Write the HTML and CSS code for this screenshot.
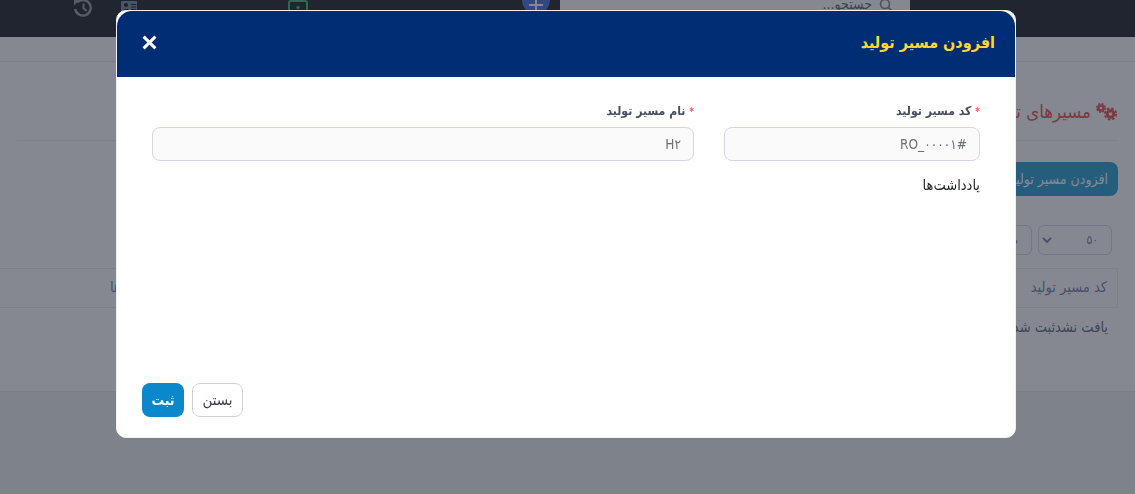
FILE: index.html
```html
<!DOCTYPE html>
<html lang="fa">
<head>
<meta charset="utf-8">
<title>افزودن مسیر تولید</title>
<link rel="stylesheet" href="styles.css">
</head>
<body>
<div class="page">
  <header class="topbar">
    <svg class="ico-history" viewBox="0 0 18 17"><path d="M3.200 2.500A7.800 7.800 0 1 1 1.200 9" fill="none" stroke="#a3a6ab" stroke-width="2.400"/><path d="M9.500 3.500v4.800l3.300 2.700" fill="none" stroke="#a3a6ab" stroke-width="2"/><path d="M0 0h5.500L0 5.500z" fill="#a3a6ab"/></svg>
    <svg class="ico-card" viewBox="0 0 16 11"><rect width="16" height="11" rx="1" fill="#8a96a8"/><circle cx="5" cy="4" r="2" fill="#2c3038"/><path d="M2 10c0-3 6-3 6 0zM10 3h5v1h-5zM10 5.500h5v1h-5zM10 8h5v1h-5z" fill="#2c3038"/></svg>
    <svg class="ico-screen" viewBox="0 0 20 11"><path d="M1 11V2.500Q1 1 2.500 1h15Q19 1 19 2.500V11" fill="none" stroke="#4fc088" stroke-width="2"/><circle cx="10" cy="7.500" r="1.700" fill="#4fc088"/></svg>
    <div class="plus"><span class="plus-mark"></span></div>
    <div class="search">
      <span class="search-text">جستجو...</span>
      <svg class="ico-search" viewBox="0 0 14 14"><circle cx="6" cy="4" r="4.500" fill="none" stroke="#8a9099" stroke-width="1.600"/><path d="M9.500 7.500l4 4" stroke="#8a9099" stroke-width="1.800"/></svg>
    </div>
  </header>
  <div class="subbar"></div>
  <main class="card">
    <div class="title-row">
      <svg class="ico-gears" viewBox="0 0 24 18">
        <circle cx="16.500" cy="11" r="3.300" fill="none" stroke="#e9655f" stroke-width="3"/>
        <circle cx="16.500" cy="11" r="5.600" fill="none" stroke="#e9655f" stroke-width="2" stroke-dasharray="2.500 1.900"/>
        <circle cx="7" cy="5" r="2.500" fill="none" stroke="#e9655f" stroke-width="2.400"/>
        <circle cx="7" cy="5" r="4.200" fill="none" stroke="#e9655f" stroke-width="1.600" stroke-dasharray="2 1.300"/>
      </svg>
      <h1 class="page-title">مسیرهای تولید</h1>
    </div>
    <button class="add-btn">افزودن مسیر تولید</button>
    <div class="filters">
      <div class="select"><span>۵۰</span><svg class="chev" viewBox="0 0 10 6"><path d="M1 1l4 4 4-4" fill="none" stroke="#8b93a4" stroke-width="2"/></svg></div>
      <div class="select select-b"><span>ص</span></div>
    </div>
    <div class="table-head"><span>کد مسیر تولید</span><span>نام مسیر تولید</span><span class="th-last">یادداشت‌ها</span></div>
    <div class="empty"><span>یافت نشد</span><span>ثبت شد</span></div>
  </main>
</div>
<div class="backdrop"></div>
<section class="modal">
  <div class="modal-head">
    <h2 class="modal-title">افزودن مسیر تولید</h2>
    <svg class="close" viewBox="0 0 14 14"><path d="M1.500 1.500l11 11M12.500 1.500l-11 11" stroke="#fff" stroke-width="2.800"/></svg>
  </div>
  <div class="modal-body">
    <div class="grid">
      <div class="field">
        <label class="label"><span class="req">*</span> کد مسیر تولید</label>
        <input class="input" value="#RO_۰۰۰۰۱">
      </div>
      <div class="field">
        <label class="label"><span class="req">*</span> نام مسیر تولید</label>
        <input class="input" value="H۲">
      </div>
    </div>
    <div class="notes">یادداشت‌ها</div>
  </div>
  <div class="modal-foot">
    <button class="btn btn-save">ثبت</button>
    <button class="btn btn-close">بستن</button>
  </div>
</section>
</body>
</html>
```
FILE: styles.css
```css
* { box-sizing: border-box; }
html, body { margin: 0; height: 100%; }
body {
  height: 494px;
  overflow: hidden;
  background: #f1f3f3;
  font-family: "DejaVu Sans Condensed", "DejaVu Sans", sans-serif;
  direction: rtl;
}
.page { height: 494px; overflow: hidden; }
.topbar {
  direction: ltr;
  height: 37px;
  background: #37383a;
  display: flex;
  align-items: flex-start;
  padding-left: 74px;
}
.ico-history { width: 18px; height: 17px; }
.ico-card { width: 16px; height: 11px; margin: 1px 0 0 29px; }
.ico-screen { width: 20px; height: 11px; margin: 0 0 0 151px; }
.plus {
  width: 28px;
  height: 14px;
  margin-left: 214px;
  background: #5b7fe0;
  border-radius: 0 0 14px 14px;
  display: flex;
  justify-content: center;
  align-items: flex-start;
  padding-top: 0;
}
.plus-mark {
  display: block;
  width: 14px;
  height: 10px;
  background: linear-gradient(#fff, #fff) center 4px/14px 2px no-repeat, linear-gradient(#fff, #fff) center/2px 10px no-repeat;
}
.search {
  width: 350px;
  height: 37px;
  margin-left: 10px;
  background: #fff;
  display: flex;
  justify-content: flex-end;
  gap: 7px;
  padding-right: 17px;
  font-size: 14px;
  color: #6e747e;
  direction: ltr;
}
.search-text { margin-top: -6px; direction: rtl; line-height: 20px; }
.ico-search { width: 14px; height: 14px; }
.subbar { height: 25px; background: #fff; border-bottom: 1px solid #eceef1; }
.card {
  height: 330px;
  background: #fff;
  padding: 32px 17px 0;
  border-bottom: 1px solid #e4e6ea;
}
.title-row {
  display: flex;
  align-items: center;
  gap: 3px;
  height: 47px;
  padding-bottom: 11px;
  border-bottom: 1px solid #eef0f3;
  margin-bottom: 21px;
}
.ico-gears { width: 24px; height: 18px; }
.page-title { margin: 0; font-size: 18.500px; font-weight: 400; color: #e9655f; }
.add-btn {
  display: block;
  height: 34px;
  padding: 0 10px;
  border: 0;
  border-radius: 8px;
  background: #3fa8d6;
  color: #fff;
  font: inherit;
  font-size: 14px;
}
.filters { display: flex; gap: 6px; margin: 29px 6px 13px 0; }
.select {
  width: 74px;
  height: 30px;
  border: 1px solid #d8dbe6;
  border-radius: 6px;
  display: flex;
  justify-content: space-between;
  align-items: center;
  padding: 0 13px 0 3px;
  font-size: 12px;
  color: #8b93a4;
}
.select-b { width: 120px; }
.chev { width: 10px; height: 6px; }
.table-head {
  height: 40px;
  display: flex;
  align-items: center;
  padding: 0 10px 2px 110px;
  margin-left: -17px;
  gap: 100px;
  border: 1px solid #eceef1;
  border-left: 0;
  background: #fff;
  color: #7f8fb0;
  font-size: 14.500px;
}
.th-last { margin-right: auto; }
.empty { display: flex; padding: 8px 10px 0; font-size: 14.500px; color: #6f7a8c; line-height: 22px; }
.backdrop {
  position: fixed;
  inset: 0;
  background: rgba(11, 17, 36, .5);
}
.modal {
  position: fixed;
  left: 116px;
  top: 10px;
  width: 900px;
  height: 428px;
  background: #fff;
  border: 1px solid #f0f1f5;
  border-radius: 10px;
  display: flex;
  flex-direction: column;
}
.modal-head {
  height: 66px;
  flex: none;
  background: #002d74;
  border-radius: 15px 15px 0 0;
  display: flex;
  justify-content: space-between;
  align-items: center;
  padding: 0 20px 4px 25px;
}
.modal-title { margin: 0; font-size: 16px; font-weight: 700; color: #fdd835; }
.close { width: 15px; height: 15px; }
.modal-body { padding: 25px 35px 0; flex: 1; }
.grid { display: grid; grid-template-columns: 256px 1fr; gap: 30px; }
.field { display: flex; flex-direction: column; }
.label { font-size: 12.200px; font-weight: 700; color: #4a4f5f; line-height: 18px; margin-bottom: 6px; }
.req { color: #ef5a5a; font-size: 10px; }
.input {
  height: 34px;
  padding: 0 12px;
  border: 1px solid #d4d6e3;
  border-radius: 8px;
  background: #fafafa;
  color: #6b6f78;
  font: inherit;
  font-size: 13.500px;
  outline: 0;
}
.notes { margin-top: 15px; font-size: 14.500px; color: #23262e; line-height: 18px; }
.modal-foot {
  direction: ltr;
  display: flex;
  gap: 8px;
  padding: 0 25px 20px;
}
.btn {
  height: 34px;
  border-radius: 8px;
  font: inherit;
  font-size: 15px;
  padding: 0;
}
.btn-save { width: 42px; border: 0; background: #0a88cb; color: #fff; font-weight: 700; font-size: 14px; }
.btn-close { width: 51px; border: 1px solid #cfd1da; background: #fff; color: #3f4350; }
```
